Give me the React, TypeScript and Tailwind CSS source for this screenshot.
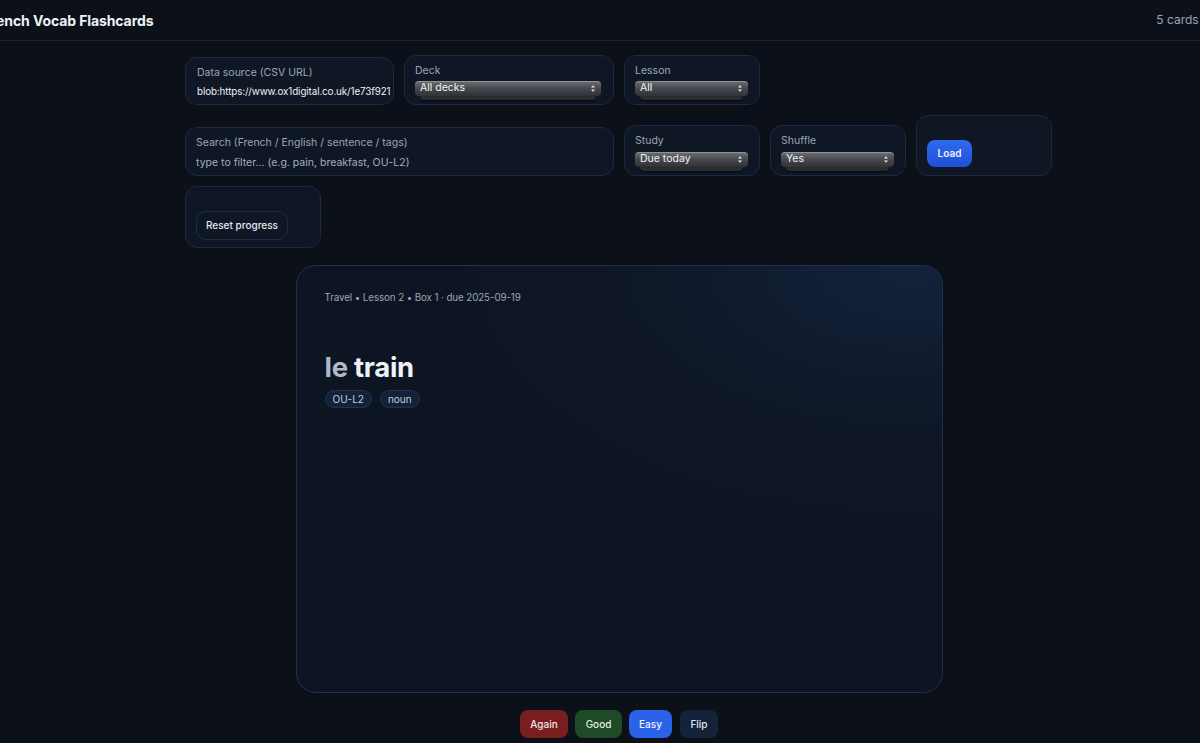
import React from "react";

const font = { fontFamily: "Inter, 'Noto Sans', 'Liberation Sans', sans-serif" };

function Chevrons() {
  return (
    <svg width="6" height="9" viewBox="0 0 6 9" className="shrink-0">
      <path d="M1 3.5 L3 1.2 L5 3.5 Z" fill="#e5e7eb" />
      <path d="M1 5.5 L3 7.8 L5 5.5 Z" fill="#e5e7eb" />
    </svg>
  );
}

function FakeSelect({ value }: { value: string }) {
  return (
    <div className="relative h-[18px] w-full">
      <div className="absolute inset-x-[5px] top-[3px] bottom-[-1px] rounded-[4px] bg-[#2a2c30] shadow-[0_1px_1px_rgba(0,0,0,0.6)]" />
      <div className="relative flex h-[15px] items-center justify-between rounded-[4px] bg-gradient-to-b from-[#6d7177] via-[#45484d] to-[#303236] px-[5px] shadow-[inset_0_1px_0_rgba(255,255,255,0.25)]">
        <span className="text-[10.5px] leading-none text-[#f3f4f6]">{value}</span>
        <Chevrons />
      </div>
    </div>
  );
}

export default function App() {
  return (
    <div className="min-h-[743px] w-full overflow-hidden bg-[#0c1018] text-[#e6edf3]" style={font}>
      <header className="flex h-[41px] items-center border-b border-[#1b2433]">
        <h1 className="-ml-[17px] text-[14px] font-bold tracking-[-0.1px] text-[#eef2f7]">French Vocab Flashcards</h1>
        <span className="ml-auto -mr-[41px] whitespace-nowrap text-[12px] text-[#9aa6b8]">5 cards · 5 due</span>
      </header>

      <main className="flex flex-col items-center pl-[38px]">
        <div className="mt-[14px] flex w-[868px] flex-wrap items-end gap-[10px]">
          <div className="h-[48px] w-[209px] rounded-[12px] border border-[#1c2940] bg-[#0f1725] pl-[11px] pr-[2px] pt-[8px]">
            <div className="text-[10.5px] leading-[14px] text-[#9aa6b8]">Data source (CSV URL)</div>
            <div className="mt-[4px] overflow-hidden whitespace-nowrap text-[9.8px] leading-[15px] tracking-[-0.1px] text-[#eef2f7]">
              blob:https://www.ox1digital.co.uk/1e73f921
            </div>
          </div>
          <div className="h-[50px] w-[210px] rounded-[12px] border border-[#1c2940] bg-[#0f1725] pl-[10px] pr-[12px] pt-[8px]">
            <div className="text-[10.5px] leading-[14px] text-[#9aa6b8]">Deck</div>
            <div className="mt-[3px]">
              <FakeSelect value="All decks" />
            </div>
          </div>
          <div className="h-[50px] w-[136px] rounded-[12px] border border-[#1c2940] bg-[#0f1725] pl-[10px] pr-[11px] pt-[8px]">
            <div className="text-[10.5px] leading-[14px] text-[#9aa6b8]">Lesson</div>
            <div className="mt-[3px]">
              <FakeSelect value="All" />
            </div>
          </div>

          <div className="h-[49px] w-[429px] rounded-[12px] border border-[#1c2940] bg-[#0f1725] px-[10px] pt-[8px]">
            <div className="text-[10.5px] leading-[14px] text-[#9aa6b8]">Search (French / English / sentence / tags)</div>
            <div className="mt-[5px] text-[10.5px] leading-[15px] text-[#a3adbd]">
              type to filter… (e.g. pain, breakfast, OU-L2)
            </div>
          </div>
          <div className="h-[51px] w-[136px] rounded-[12px] border border-[#1c2940] bg-[#0f1725] pl-[10px] pr-[11px] pt-[8px]">
            <div className="text-[10.5px] leading-[14px] text-[#9aa6b8]">Study</div>
            <div className="mt-[4px]">
              <FakeSelect value="Due today" />
            </div>
          </div>
          <div className="h-[51px] w-[136px] rounded-[12px] border border-[#1c2940] bg-[#0f1725] pl-[10px] pr-[11px] pt-[8px]">
            <div className="text-[10.5px] leading-[14px] text-[#9aa6b8]">Shuffle</div>
            <div className="mt-[4px]">
              <FakeSelect value="Yes" />
            </div>
          </div>
          <div className="flex h-[61px] w-[136px] items-end rounded-[12px] border border-[#1c2940] bg-[#0f1725] pb-[8px] pl-[10px]">
            <button className="h-[27px] w-[45px] rounded-[8px] bg-gradient-to-b from-[#2f6bf0] to-[#1f4fd6] text-[10px] font-semibold text-[#eef2ff]">
              Load
            </button>
          </div>

          <div className="flex h-[62px] w-[136px] items-end rounded-[12px] border border-[#1c2940] bg-[#0f1725] pb-[7px] pl-[10px]">
            <button className="h-[29px] w-[92px] rounded-[10px] border border-[#1f2d45] bg-[#0f1725] text-[10px] font-medium text-[#e3e8ef]">
              Reset progress
            </button>
          </div>
        </div>

        <section className="mt-[17px] h-[428px] w-[647px] rounded-[20px] border border-[#1e3050] bg-[radial-gradient(ellipse_70%_60%_at_95%_0%,#13223b_0%,#0f1829_55%,#0e1522_100%)] px-[28px] pt-[25px]">
          <div className="text-[9.8px] leading-[14px] tracking-[-0.1px] text-[#9aa6b8]">Travel • Lesson 2 • Box 1 · due 2025-09-19</div>
          <div className="mt-[46px] text-[27.5px] font-bold leading-[33px] tracking-[-0.3px]">
            <span className="text-[#aeb8c8]">le</span> <span className="text-[#eef2f8]">train</span>
          </div>
          <div className="mt-[6px] flex gap-[8px]">
            <span className="flex h-[18px] items-center rounded-full border border-[#1f3350] bg-[#13223a] px-[7px] text-[10px] text-[#c2ccda]">OU-L2</span>
            <span className="flex h-[18px] items-center rounded-full border border-[#1f3350] bg-[#13223a] px-[7px] text-[10px] text-[#c2ccda]">noun</span>
          </div>
        </section>

        <div className="mt-[17px] flex gap-[7px]">
          <button className="h-[28px] w-[48px] rounded-[8px] bg-[#7a1d1f] text-[10px] font-medium text-[#f1e6e6]">Again</button>
          <button className="h-[28px] w-[47px] rounded-[8px] bg-[#1e4a26] text-[10px] font-medium text-[#e3efe5]">Good</button>
          <button className="h-[28px] w-[43px] rounded-[8px] bg-[#2a62e8] text-[10px] font-medium text-[#eef3ff]">Easy</button>
          <button className="ml-[1px] h-[28px] w-[38px] rounded-[8px] bg-[#15233a] text-[10px] font-medium text-[#dfe6f0]">Flip</button>
        </div>
      </main>
    </div>
  );
}
